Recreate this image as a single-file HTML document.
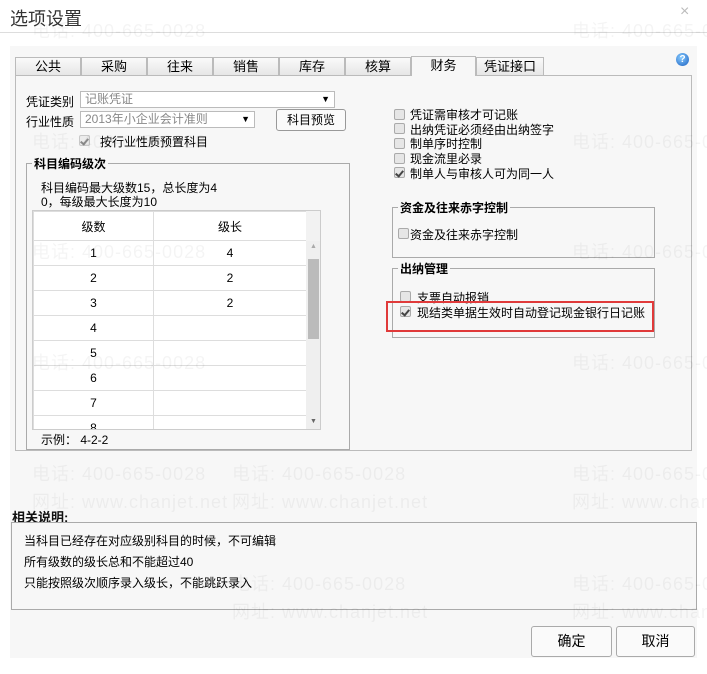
<!DOCTYPE html><html><head><meta charset="utf-8"><style>
*{margin:0;padding:0;box-sizing:border-box}
body{width:707px;height:674px;background:#fff;font-family:"Liberation Sans","Noto Sans CJK SC",sans-serif;font-size:12px;color:#000;position:relative;overflow:hidden}
.a{position:absolute}
.title{left:10px;top:5px;font-size:18px;color:#333}
.panel{left:10px;top:46px;width:687px;height:612px;background:#f7f7f7}
.tab{top:57px;height:19px;border:1px solid #bbb;background:linear-gradient(#fafafa,#e6e6e6);text-align:center;line-height:17px;font-size:13px}
.cb{width:11px;height:11px;border:1px solid #aaa;background:#e6e6e6;border-radius:2px}
.ck{background:#e6e6e6 url() }
.ck::after{content:"";position:absolute;left:2px;top:1px;width:3px;height:6px;border:solid #444;border-width:0 2px 2px 0;transform:rotate(40deg)}
.lb{font-size:12px}
.fs{border:1px solid #aaa}
.leg{background:#f7f7f7;font-weight:bold;font-size:12px;padding:0 2px}
table{border-collapse:collapse}
td{border:1px solid #ddd;height:25px;text-align:center;font-size:12px;background:#fff}
.wm{color:rgba(0,0,0,0.045);font-size:18px;white-space:nowrap;letter-spacing:1px}
.btn{top:626px;height:31px;border:1px solid #aaa;border-radius:3px;background:#fafafa;text-align:center;line-height:29px;font-size:14px}
</style></head><body>
<div class="a title">选项设置</div>
<div class="a" style="left:0;top:32px;width:707px;height:1px;background:#ddd"></div>
<div class="a" style="left:680px;top:3px;font-size:16px;color:#bbb">×</div>
<div class="a panel"></div>
<div class="a" style="left:15px;top:75px;width:677px;height:376px;border:1px solid #bbb;background:#f7f7f7"></div>
<div class="a tab" style="left:15px;width:66px">公共</div>
<div class="a tab" style="left:81px;width:66px">采购</div>
<div class="a tab" style="left:147px;width:66px">往来</div>
<div class="a tab" style="left:213px;width:66px">销售</div>
<div class="a tab" style="left:279px;width:66px">库存</div>
<div class="a tab" style="left:345px;width:66px">核算</div>
<div class="a tab" style="left:411px;width:65px;background:#f7f7f7;border-bottom:none;height:20px;top:56px">财务</div>
<div class="a tab" style="left:476px;width:68px">凭证接口</div>
<div class="a" style="left:676px;top:53px;width:13px;height:13px;border-radius:50%;background:radial-gradient(circle at 40% 35%,#8cf,#1a5fc0);color:#fff;font-size:10px;font-weight:bold;text-align:center;line-height:13px">?</div>

<div class="a lb" style="left:26px;top:93px">凭证类别</div>
<div class="a" style="left:80px;top:91px;width:255px;height:17px;border:1px solid #bbb;background:#fff;color:#888;padding-left:4px;line-height:15px">记账凭证<span style="position:absolute;right:4px;color:#000;font-size:9px">▼</span></div>
<div class="a lb" style="left:26px;top:113px">行业性质</div>
<div class="a" style="left:80px;top:111px;width:175px;height:17px;border:1px solid #bbb;background:#fff;color:#888;padding-left:4px;line-height:15px">2013年小企业会计准则<span style="position:absolute;right:4px;color:#000;font-size:9px">▼</span></div>
<div class="a" style="left:276px;top:109px;width:70px;height:22px;border:1px solid #999;border-radius:3px;background:#fafafa;text-align:center;line-height:20px">科目预览</div>
<div class="a cb ck" style="left:79px;top:135px;opacity:.6"></div>
<div class="a lb" style="left:100px;top:133px">按行业性质预置科目</div>

<div class="a fs" style="left:26px;top:163px;width:324px;height:287px"></div>
<div class="a leg" style="left:32px;top:155px">科目编码级次</div>
<div class="a" style="left:41px;top:181px;line-height:14px">科目编码最大级数15，总长度为4<br>0，每级最大长度为10</div>
<div class="a" style="left:32px;top:210px;width:289px;height:220px;border:1px solid #ccc;overflow:hidden;background:#fff">
<table style="width:274px"><tr><td style="width:120px;height:29px">级数</td><td>级长</td></tr>
<tr><td>1</td><td>4</td></tr><tr><td>2</td><td>2</td></tr><tr><td>3</td><td>2</td></tr><tr><td>4</td><td></td></tr><tr><td>5</td><td></td></tr><tr><td>6</td><td></td></tr><tr><td>7</td><td></td></tr><tr><td>8</td><td></td></tr></table>
<div class="a" style="left:273px;top:0;width:15px;height:220px;background:#f2f2f2"></div>
<div class="a" style="left:273px;top:30px;width:15px;height:189px;background:#efefef"></div>
<div class="a" style="left:275px;top:48px;width:11px;height:80px;background:#bbb"></div>
<div class="a" style="left:277px;top:32px;font-size:7px;color:#aaa">▲</div>
<div class="a" style="left:277px;top:207px;font-size:7px;color:#666">▼</div>
</div>
<div class="a" style="left:41px;top:431px">示例： 4-2-2</div>

<div class="a cb" style="left:394px;top:109px"></div><div class="a lb" style="left:410px;top:106px">凭证需审核才可记账</div>
<div class="a cb" style="left:394px;top:123px"></div><div class="a lb" style="left:410px;top:121px">出纳凭证必须经由出纳签字</div>
<div class="a cb" style="left:394px;top:138px"></div><div class="a lb" style="left:410px;top:135px">制单序时控制</div>
<div class="a cb" style="left:394px;top:153px"></div><div class="a lb" style="left:410px;top:150px">现金流里必录</div>
<div class="a cb ck" style="left:394px;top:167px"></div><div class="a lb" style="left:410px;top:165px">制单人与审核人可为同一人</div>

<div class="a fs" style="left:392px;top:207px;width:263px;height:51px"></div>
<div class="a leg" style="left:398px;top:199px">资金及往来赤字控制</div>
<div class="a cb" style="left:398px;top:228px"></div><div class="a lb" style="left:410px;top:226px">资金及往来赤字控制</div>
<div class="a fs" style="left:392px;top:268px;width:263px;height:70px"></div>
<div class="a leg" style="left:398px;top:260px">出纳管理</div>
<div class="a cb" style="left:400px;top:291px"></div><div class="a lb" style="left:417px;top:289px">支票自动报销</div>
<div class="a cb ck" style="left:400px;top:306px"></div><div class="a lb" style="left:417px;top:304px">现结类单据生效时自动登记现金银行日记账</div>
<div class="a" style="left:386px;top:301px;width:268px;height:31px;border:2px solid #e03a3a"></div>

<div class="a" style="left:12px;top:507px;font-weight:bold;font-size:13px;color:#111">相关说明:</div>
<div class="a" style="left:11px;top:522px;width:686px;height:88px;border:1px solid #aaa;background:#f7f7f7"></div>
<div class="a" style="left:24px;top:531px;line-height:21px">当科目已经存在对应级别科目的时候，不可编辑<br>所有级数的级长总和不能超过40<br>只能按照级次顺序录入级长，不能跳跃录入</div>
<div class="a btn" style="left:531px;width:81px">确定</div>
<div class="a btn" style="left:616px;width:79px">取消</div>

<div class="a" style="left:0;top:0;pointer-events:none">
<div class="a wm" style="left:32px;top:17px">电话: 400-665-0028</div><div class="a wm" style="left:572px;top:17px">电话: 400-665-0028</div>
<div class="a wm" style="left:32px;top:128px">电话: 400-665-0028</div><div class="a wm" style="left:572px;top:128px">电话: 400-665-0028</div>
<div class="a wm" style="left:32px;top:238px">电话: 400-665-0028</div><div class="a wm" style="left:572px;top:238px">电话: 400-665-0028</div>
<div class="a wm" style="left:32px;top:349px">电话: 400-665-0028</div><div class="a wm" style="left:572px;top:349px">电话: 400-665-0028</div>
<div class="a wm" style="left:32px;top:460px">电话: 400-665-0028</div><div class="a wm" style="left:232px;top:460px">电话: 400-665-0028</div><div class="a wm" style="left:572px;top:460px">电话: 400-665-0028</div>
<div class="a wm" style="left:232px;top:570px">电话: 400-665-0028</div><div class="a wm" style="left:572px;top:570px">电话: 400-665-0028</div>
<div class="a wm" style="left:32px;top:488px">网址: www.chanjet.net</div><div class="a wm" style="left:232px;top:488px">网址: www.chanjet.net</div><div class="a wm" style="left:572px;top:488px">网址: www.chanjet.net</div>
<div class="a wm" style="left:232px;top:598px">网址: www.chanjet.net</div><div class="a wm" style="left:572px;top:598px">网址: www.chanjet.net</div>
</div>
</body></html>
